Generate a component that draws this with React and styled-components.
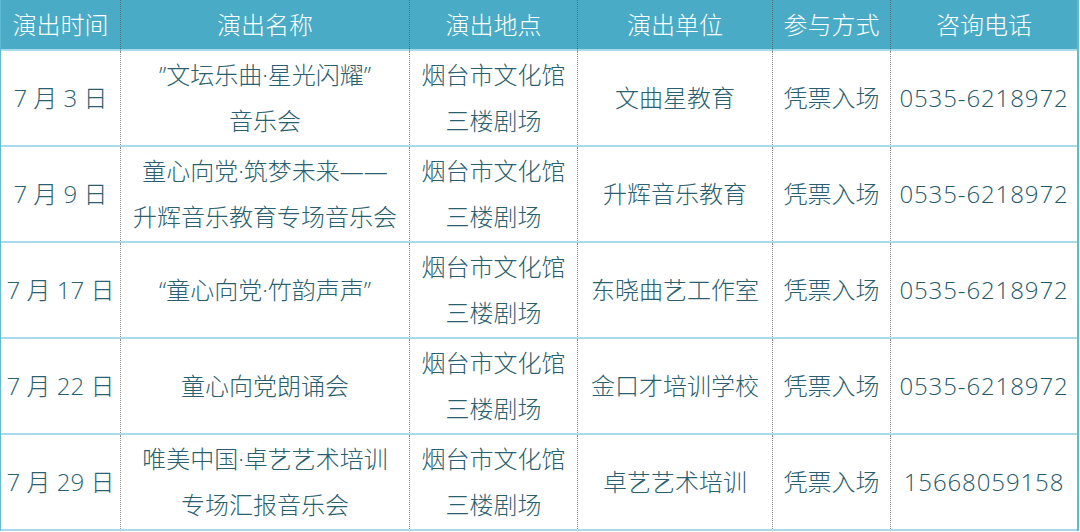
import React from "react";
import styled, { createGlobalStyle } from "styled-components";

const rows = [
  { date: "7 月 3 日", name: ["\u201d文坛乐曲·星光闪耀\u201d", "音乐会"], unit: "文曲星教育", phone: "0535-6218972" },
  { date: "7 月 9 日", name: ["童心向党·筑梦未来——", "升辉音乐教育专场音乐会"], unit: "升辉音乐教育", phone: "0535-6218972" },
  { date: "7 月 17 日", name: ["\u201c童心向党·竹韵声声\u201d"], unit: "东晓曲艺工作室", phone: "0535-6218972" },
  { date: "7 月 22 日", name: ["童心向党朗诵会"], unit: "金口才培训学校", phone: "0535-6218972" },
  { date: "7 月 29 日", name: ["唯美中国·卓艺艺术培训", "专场汇报音乐会"], unit: "卓艺艺术培训", phone: "15668059158" },
];

const heads = ["演出时间", "演出名称", "演出地点", "演出单位", "参与方式", "咨询电话"];

const App = () => {
  return (
    <>
      <Global />
      <Table>
        {heads.map((h, i) => (
          <Head key={h} $first={i === 0}>
            {h}
          </Head>
        ))}
        {rows.map((r, i) => (
          <React.Fragment key={i}>
            <Cell $first>{r.date}</Cell>
            <Cell>
              {r.name.map((n) => (
                <Line key={n}>{n}</Line>
              ))}
            </Cell>
            <Cell>
              <Line>烟台市文化馆</Line>
              <Line>三楼剧场</Line>
            </Cell>
            <Cell>{r.unit}</Cell>
            <Cell>凭票入场</Cell>
            <Cell>
              <Phone>{r.phone}</Phone>
            </Cell>
          </React.Fragment>
        ))}
      </Table>
    </>
  );
};

export default App;

const Global = createGlobalStyle`
  body {
    margin: 0;
    background: #ffffff;
    font-family: "Noto Sans CJK SC", "Noto Sans", sans-serif;
  }
`;

const Table = styled.div`
  width: 1076px;
  display: grid;
  grid-template-columns: 119px 289px 168px 195px 118px 187px;
  grid-template-rows: 51px repeat(5, 96px);
  border-right: 2px solid #5dbbd6;
  border-left: 1px solid #5dbbd6;
  box-sizing: content-box;
`;

const Head = styled.div`
  background: #4aabc6;
  color: #ffffff;
  font-size: 24px;
  font-weight: 300;
  display: flex;
  align-items: center;
  justify-content: center;
  border-left: ${(p) => (p.$first ? "none" : "1px dotted #4f6f78")};
  border-bottom: 2px solid #a9dae9;
  box-sizing: border-box;
  padding-bottom: 2px;
`;

const Cell = styled.div`
  display: flex;
  flex-direction: column;
  align-items: center;
  justify-content: center;
  color: #2b5f6f;
  font-size: 24px;
  font-weight: 300;
  line-height: 46px;
  text-align: center;
  white-space: nowrap;
  border-left: ${(p) => (p.$first ? "none" : "1px dotted #8a8a8a")};
  border-bottom: 2px solid #a9dae9;
  box-sizing: border-box;
  font-family: "Open Sans", "Noto Sans CJK SC", sans-serif;
`;

const Line = styled.span`
  display: block;
  font-family: "Open Sans", "Noto Sans CJK SC", sans-serif;
`;

const Phone = styled.span`
  font-family: "Open Sans", sans-serif;
  font-weight: 300;
  letter-spacing: 0.9px;
  color: #24596a;
`;
